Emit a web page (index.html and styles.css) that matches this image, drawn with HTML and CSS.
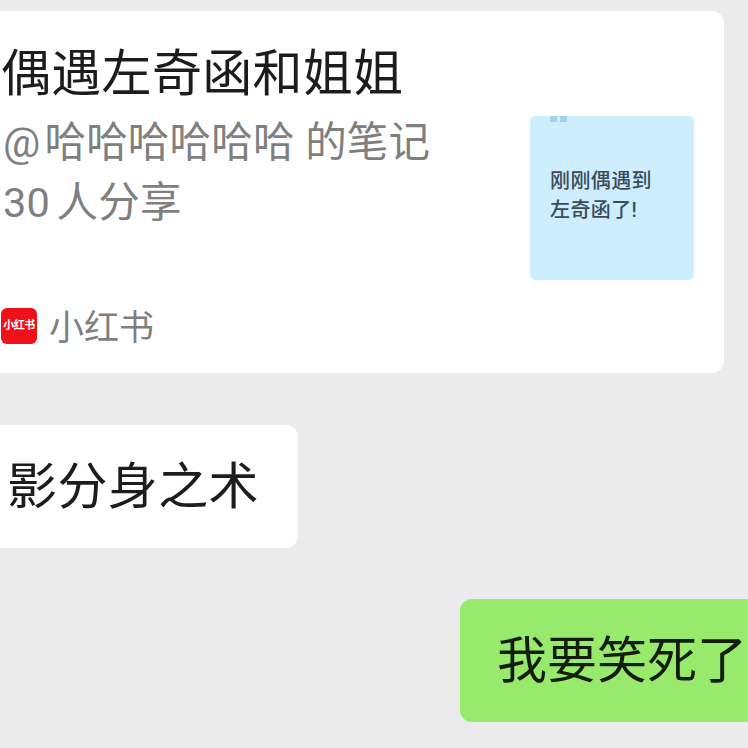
FILE: index.html
```html
<!DOCTYPE html>
<html lang="zh-CN">
  <head>
    <meta charset="UTF-8" />
    <title>聊天</title>
    <link rel="stylesheet" href="styles.css">
  </head>
  <body>
    <div class="chat">
      <div class="card">
        <div class="card-top">
          <div class="card-text">
            <h1>偶遇左奇函和姐姐</h1>
            <p><span class="at">@</span>哈哈哈哈哈哈 的笔记</p>
            <p class="share">30 人分享</p>
          </div>
          <div class="thumb">
            <div class="thumb-marks"><span></span><span></span></div>
            <p>刚刚偶遇到<br />左奇函了!</p>
          </div>
        </div>
        <div class="source">
          <span class="source-icon">小红书</span>
          <span class="source-name">小红书</span>
        </div>
      </div>

      <div class="bubble">影分身之术</div>
      <div class="bubble bubble-me">我要笑死了</div>
    </div>
  </body>
</html>
```

FILE: styles.css
```css
html,
body {
  margin: 0;
  height: 100%;
}

body {
  background: #ebebeb;
  font-family: Roboto, "Noto Sans CJK SC", sans-serif;
  overflow: hidden;
}

.chat {
  display: flex;
  flex-direction: column;
  padding-top: 11px;
  width: 748px;
  overflow: hidden;
}

.card {
  box-sizing: border-box;
  width: 736px;
  height: 362px;
  margin-left: -12px;
  padding: 34px 30px 0 13px;
  background: #fff;
  border-radius: 12px;
}

.card-top {
  display: flex;
  justify-content: space-between;
}

.card-text h1 {
  margin: 0 0 10px 0;
  font-size: 50px;
  line-height: 58px;
  font-weight: 400;
  letter-spacing: 0.3px;
  color: #1c1c1c;
}

.card-text p {
  margin: 0 0 0 2px;
  font-size: 41.5px;
  line-height: 60px;
  letter-spacing: 0.2px;
  color: #7f7f7f;
}

.at {
  margin-right: 4px;
}

.card-text .share {
  word-spacing: -4px;
}

.thumb {
  position: relative;
  box-sizing: border-box;
  width: 164px;
  height: 164px;
  margin-top: 71px;
  padding: 51px 0 0 20px;
  background: #cdeeff;
  border-radius: 6px;
}

.thumb p {
  margin: 0;
  font-size: 20px;
  line-height: 29px;
  font-weight: 500;
  letter-spacing: 0.4px;
  color: #3b4a57;
}

.thumb-marks {
  position: absolute;
  top: 0;
  left: 20px;
  display: flex;
  gap: 3px;
}

.thumb-marks span {
  width: 7px;
  height: 6px;
  background: #a3d3ea;
}

.source {
  display: flex;
  align-items: flex-start;
  gap: 12px;
  margin-top: 28px;
}

.source-icon {
  width: 36px;
  height: 36px;
  background: #f0101a;
  border-radius: 6px;
  color: #fff;
  font-size: 11px;
  font-weight: 700;
  line-height: 36px;
  letter-spacing: -0.5px;
  text-align: center;
  white-space: nowrap;
}

.source-name {
  margin-top: 1px;
  font-size: 35px;
  line-height: 40px;
  color: #7f7f7f;
}

.bubble {
  box-sizing: border-box;
  width: 310px;
  height: 123px;
  margin: 52px 0 0 -12px;
  padding: 2px 0 0 19px;
  background: #fff;
  border-radius: 12px;
  font-size: 50px;
  line-height: 121px;
  letter-spacing: 0.4px;
  color: #1c1c1c;
}

.bubble-me {
  width: 300px;
  margin: 51px 0 0 460px;
  padding-left: 37px;
  background: #98ea6c;
  color: #141c0c;
  letter-spacing: 0;
  white-space: nowrap;
}
```
